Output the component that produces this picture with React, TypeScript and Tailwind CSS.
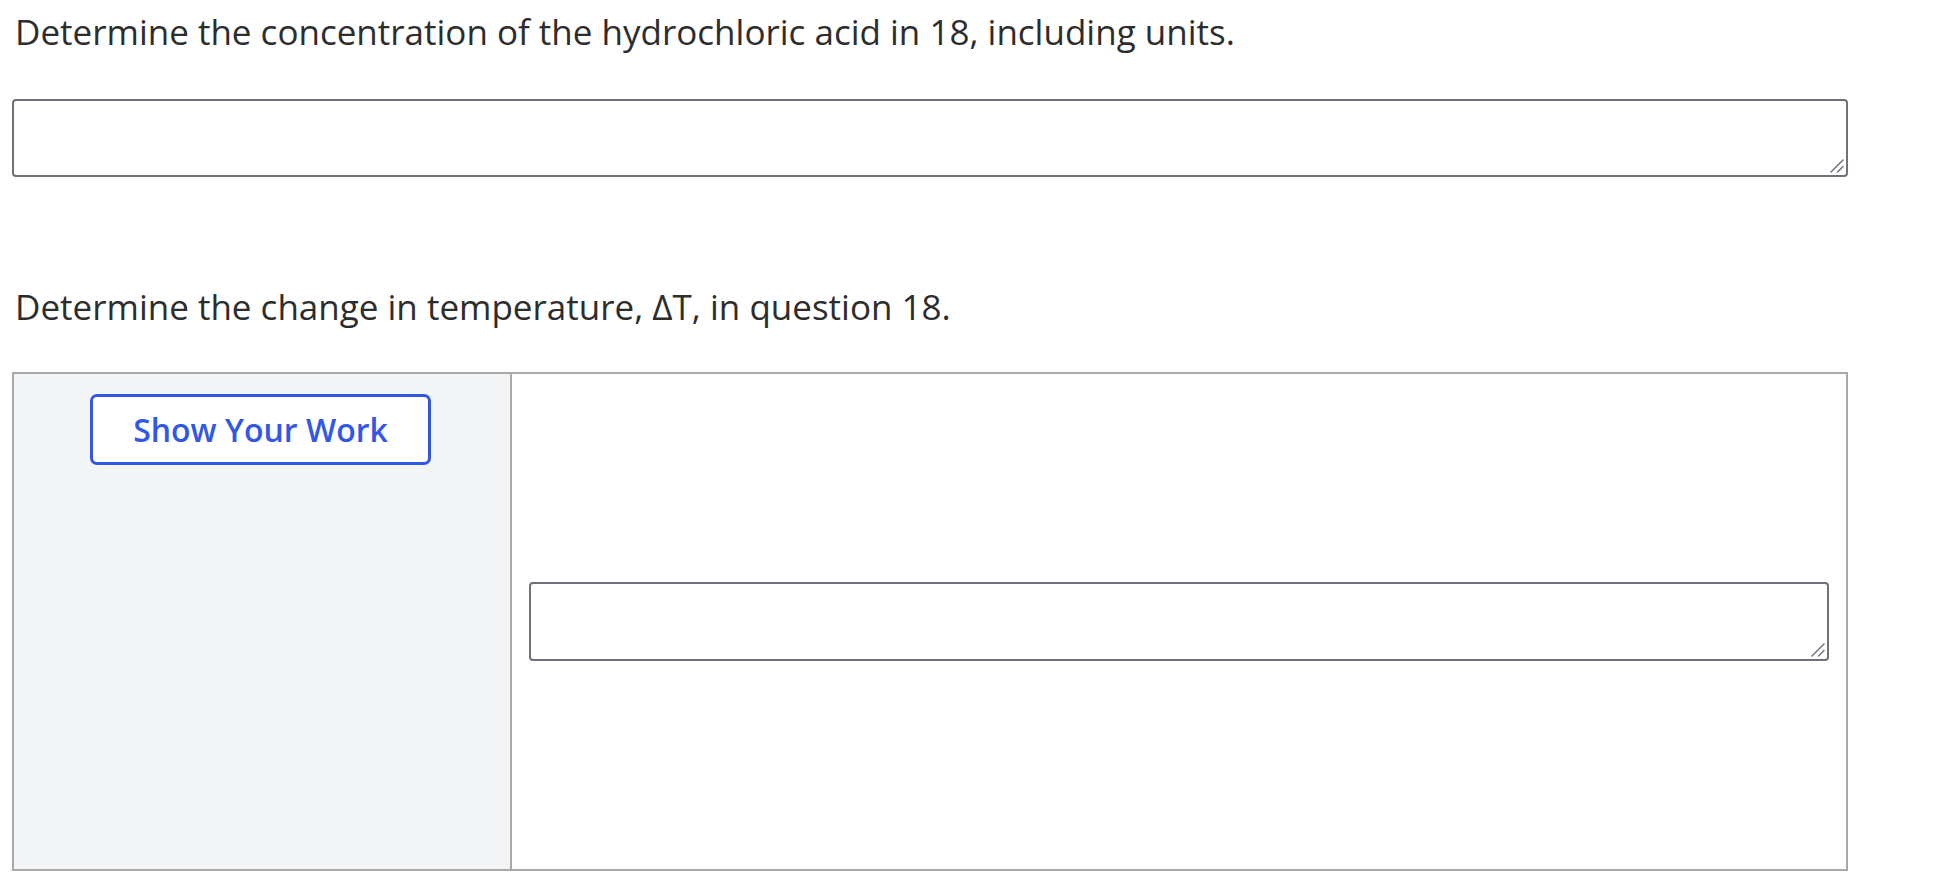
function Grip() {
  return (
    <svg
      className="pointer-events-none absolute bottom-[4px] right-[4px]"
      width="14"
      height="14"
      viewBox="0 0 14 14"
      fill="none"
      stroke="#6e717b"
      strokeWidth="1.5"
      strokeLinecap="round"
    >
      <path d="M1 13 L13 1" />
      <path d="M7.5 13 L13 7.5" />
    </svg>
  );
}

function AnswerBox({ className = "" }: { className?: string }) {
  return (
    <div className={`relative ${className}`}>
      <textarea
        className="block h-full w-full resize-none rounded-[4px] border-2 border-[#6e717b] bg-white px-3 py-2 text-[20px] outline-none"
        aria-label="answer"
      />
      <Grip />
    </div>
  );
}

export default function App() {
  return (
    <div className="min-h-screen bg-white pl-[12px] pt-[10px] text-[#2d2d2d] font-['Open_Sans',sans-serif]">
      {/* question 1 */}
      <p className="pl-[3px] text-[35px] leading-[44px]">
        Determine the concentration of the hydrochloric acid in 18, including units.
      </p>
      <AnswerBox className="mt-[45px] h-[78px] w-[1836px]" />

      {/* question 2 */}
      <p className="mt-[108px] pl-[3px] text-[35px] leading-[44px]">
        Determine the change in temperature, ΔT, in question 18.
      </p>
      <div className="mt-[43px] flex h-[499px] w-[1836px] border-2 border-[#a9a9a9]">
        <div className="w-[498px] shrink-0 border-r-2 border-[#a9a9a9] bg-[#f3f4f6] pt-[20px]">
          <button className="ml-[76px] flex h-[71px] w-[341px] items-center justify-center rounded-[7px] border-[3px] border-[#3357e5] bg-white text-[32px] font-semibold text-[#3357e5]">
            Show Your Work
          </button>
        </div>
        <div className="flex flex-1 items-center px-[17px]">
          <AnswerBox className="h-[79px] w-full" />
        </div>
      </div>
    </div>
  );
}
